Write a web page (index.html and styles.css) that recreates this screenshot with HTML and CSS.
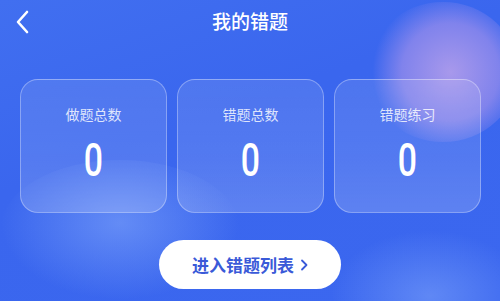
FILE: index.html
```html
<!DOCTYPE html>
<html lang="zh">
<head>
<meta charset="utf-8">
<link rel="stylesheet" href="styles.css">
</head>
<body>
<div class="page">
  <div class="blob blob-pink"></div>
  <div class="blob blob-left"></div>
  <div class="blob blob-right"></div>
  <header class="nav">
    <span class="back">
      <svg width="16" height="24" viewBox="0 0 16 24"><path d="M13 2 L4 12 L13 22" fill="none" stroke="#fff" stroke-width="2.6" stroke-linecap="round" stroke-linejoin="round"/></svg>
    </span>
    <h1 class="title">我的错题</h1>
  </header>
  <section class="cards">
    <div class="card"><div class="label">做题总数</div><div class="num">0</div></div>
    <div class="card"><div class="label">错题总数</div><div class="num">0</div></div>
    <div class="card"><div class="label">错题练习</div><div class="num">0</div></div>
  </section>
  <div class="action">
    <button class="btn">进入错题列表<svg class="chev" width="8" height="12" viewBox="0 0 8 12"><path d="M2 1.5 L6.5 6 L2 10.5" fill="none" stroke="#3a5ad8" stroke-width="1.8" stroke-linecap="round" stroke-linejoin="round"/></svg></button>
  </div>
</div>
</body>
</html>
```

FILE: styles.css
```css
html, body {
  margin: 0;
  padding: 0;
}
body {
  width: 500px;
  height: 301px;
  overflow: hidden;
  font-family: "Noto Sans CJK SC", "Noto Sans", sans-serif;
}
.page {
  position: relative;
  width: 500px;
  height: 301px;
  overflow: hidden;
  background: linear-gradient(160deg, #416ff0 0%, #3a66ee 40%, #3b67ef 100%);
}
.blob {
  position: absolute;
  border-radius: 50%;
  pointer-events: none;
}
.blob-pink {
  left: 368px;
  top: 2px;
  width: 150px;
  height: 140px;
  background: radial-gradient(circle at 55% 50%, rgba(195, 165, 235, 0.8) 0%, rgba(175, 150, 235, 0.6) 45%, rgba(150, 140, 235, 0) 72%);
}
.blob-left {
  left: 0px;
  top: 160px;
  width: 240px;
  height: 140px;
  background: radial-gradient(ellipse at 50% 45%, rgba(150, 185, 255, 0.45) 0%, rgba(130, 170, 255, 0) 70%);
}
.blob-right {
  left: 330px;
  top: 230px;
  width: 200px;
  height: 110px;
  background: radial-gradient(ellipse at 50% 60%, rgba(150, 185, 255, 0.4) 0%, rgba(130, 170, 255, 0) 70%);
}
.nav {
  position: relative;
  height: 44px;
  display: flex;
  align-items: center;
  justify-content: center;
}
.back {
  position: absolute;
  left: 14px;
  top: 10px;
  display: flex;
}
.title {
  margin: 0;
  font-size: 19px;
  font-weight: 500;
  color: #fff;
  line-height: 1;
  margin-top: -3px;
}
.cards {
  position: relative;
  display: flex;
  gap: 10px;
  padding: 35px 19px 0 20px;
}
.card {
  flex: 1;
  height: 132px;
  border-radius: 18px;
  border: 1px solid rgba(255, 255, 255, 0.32);
  background: linear-gradient(180deg, rgba(255, 255, 255, 0.1) 0%, rgba(255, 255, 255, 0.13) 60%, rgba(255, 255, 255, 0.18) 100%);
  display: flex;
  flex-direction: column;
  align-items: center;
  box-sizing: content-box;
}
.label {
  margin-top: 24px;
  font-size: 14px;
  line-height: 20px;
  color: rgba(255, 255, 255, 0.82);
}
.num {
  margin-top: 14px;
  font-family: Roboto, sans-serif;
  font-size: 47px;
  line-height: 44px;
  font-weight: 500;
  color: #fff;
  transform: scaleX(0.72);
}
.action {
  position: relative;
  display: flex;
  justify-content: center;
  padding-top: 27px;
}
.btn {
  width: 182px;
  height: 49px;
  border: none;
  border-radius: 25px;
  background: #fff;
  color: #3a5ad8;
  font-family: "Noto Sans CJK SC", sans-serif;
  font-size: 17px;
  font-weight: 700;
  display: flex;
  align-items: center;
  justify-content: center;
  gap: 6px;
  padding: 0;
}
.chev {
  margin-top: 1px;
}
```
